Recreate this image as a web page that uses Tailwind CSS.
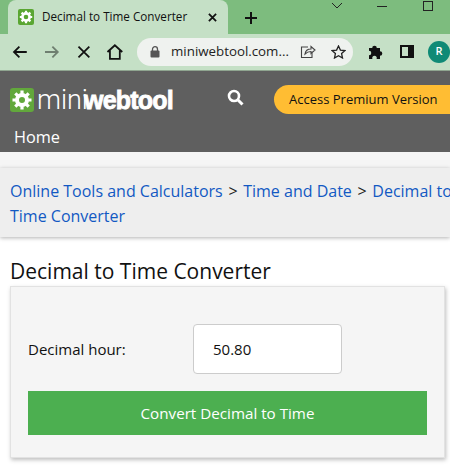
<!DOCTYPE html>
<html><head><meta charset="utf-8"><script src="https://cdn.jsdelivr.net/npm/@tailwindcss/browser@4"></script></head>
<body class="w-[450px] h-[467px] overflow-hidden bg-white font-['Open_Sans','Noto_Sans',sans-serif]">
<!-- tab strip -->
<div class="relative h-[34px] bg-[#7dbc7e] flex items-end pl-[8px]">
  <div class="w-[220px] h-[34px] bg-[#c5e0c6] rounded-t-[8px] flex items-center pl-[10px] text-[#111]">
    <svg width="16" height="16" viewBox="0 0 16 16" class="mr-[8px] shrink-0"><rect width="16" height="16" rx="2" fill="#5aa632"/><circle cx="8" cy="8" r="3.6" fill="none" stroke="#fff" stroke-width="2.6"/><path d="M8 1.8v3M8 11.2v3M1.8 8h3M11.2 8h3M3.6 3.6l2.1 2.1M10.3 10.3l2.1 2.1M12.4 3.6l-2.1 2.1M5.7 10.3l-2.1 2.1" stroke="#fff" stroke-width="2.2"/></svg>
    <span class="text-[11.7px] leading-none whitespace-nowrap w-[166px]">Decimal to Time Converter</span>
    <svg width="9" height="9" viewBox="0 0 10 10"><path d="M1 1l8 8M9 1l-8 8" stroke="#111" stroke-width="2"/></svg>
  </div>
  <svg width="14" height="14" viewBox="0 0 14 14" class="ml-[16px] mb-[9px]"><path d="M7 1v12M1 7h12" stroke="#111" stroke-width="2"/></svg>
  <svg width="12" height="7" viewBox="0 0 12 7" class="absolute left-[331px] top-[2px]"><path d="M1 1l5 5 5-5" fill="none" stroke="#222" stroke-width="1"/></svg>
  <div class="absolute left-[377px] top-[6px] w-[10px] h-px bg-[#222]"></div>
  <div class="absolute left-[423px] top-[1px] w-[10px] h-[10px] border border-[#222]"></div>
</div>
<!-- toolbar -->
<div class="h-[36px] bg-[#c5e0c6] flex items-center relative">
  <svg width="16" height="14" viewBox="0 0 16 14" class="ml-[12px]"><path d="M15 7H2M7.5 1.500L2 7l5.500 5.500" fill="none" stroke="#111" stroke-width="1.800"/></svg>
  <svg width="16" height="14" viewBox="0 0 16 14" class="ml-[16px]"><path d="M1 7h13M8.500 1.500L14 7l-5.500 5.500" fill="none" stroke="#6f7f70" stroke-width="1.800"/></svg>
  <svg width="14" height="14" viewBox="0 0 14 14" class="ml-[17px]"><path d="M1.500 1.500l11 11M12.500 1.500l-11 11" stroke="#111" stroke-width="1.800"/></svg>
  <svg width="18" height="16" viewBox="0 0 18 16" class="ml-[16px]"><path d="M1.500 8L9 1.200 16.500 8M4 6.500V15h10V6.500" fill="none" stroke="#111" stroke-width="1.800"/></svg>
  <div class="ml-[13px] w-[219px] h-[28px] bg-[#eff2ef] rounded-full flex items-center pl-[13px] mt-[-1px]">
    <svg width="10" height="12" viewBox="0 0 10 12" class="shrink-0"><rect x="0.500" y="4.500" width="9" height="7" rx="1" fill="#555"/><path d="M2.500 5V3.200a2.500 2.500 0 015 0V5" fill="none" stroke="#555" stroke-width="1.300"/></svg>
    <span class="ml-[11px] text-[13.3px] leading-none text-[#222] whitespace-nowrap">miniwebtool.com...</span>
    <svg width="16" height="15" viewBox="0 0 16 15" class="ml-[11px] shrink-0"><path d="M8 3H1.500v10.500h10.500V9" fill="none" stroke="#444" stroke-width="1.100"/><path d="M5 10c.5-3.500 3-5 6-5V2.500L15 6l-4 3.500V7.500c-2.500 0-4.500 1-6 2.500z" fill="none" stroke="#444" stroke-width="1.100"/></svg>
    <svg width="15" height="14" viewBox="0 0 15 14" class="ml-[15px] shrink-0"><path d="M7.500 1l1.900 4.100 4.500.5-3.300 3 .9 4.400-4-2.200-4 2.200.9-4.400-3.300-3 4.500-.5z" fill="none" stroke="#222" stroke-width="1.300"/></svg>
  </div>
  <svg width="15" height="15" viewBox="0 0 15 15" class="ml-[15px] shrink-0 mt-[-1px]"><path d="M1 4h3.200a2.300 2.300 0 114.600 0H12v3.200a2.300 2.300 0 110 4.600V15H8.600a2.300 2.300 0 10-4.200 0H1v-3.700a2.300 2.300 0 100-4.600z" fill="#111"/></svg>
  <div class="ml-[17px] w-[14px] h-[13px] border-2 border-[#111] border-r-[6px] shrink-0 mt-[-1px]"></div>
  <div class="ml-[14px] w-[22px] h-[22px] rounded-full bg-[#0f8a76] text-white text-[11px] font-semibold flex items-center justify-center shrink-0 mt-[-1px]">R</div>
</div>
<!-- site header -->
<div class="h-[82px] bg-[#5f5f5f] border-t border-[#8fa590] relative">
  <div class="flex items-center pl-[10px] pt-[15px]">
    <svg width="24" height="24" viewBox="0 0 24 24" class="shrink-0"><rect width="24" height="24" rx="3" fill="#62a83c"/><circle cx="12" cy="12" r="5" fill="none" stroke="#fff" stroke-width="4"/><path d="M12 2.500v4M12 17.500v4M2.500 12h4M17.500 12h4M5.300 5.300l2.800 2.800M15.900 15.900l2.800 2.800M18.700 5.300l-2.800 2.800M8.100 15.900l-2.800 2.800" stroke="#fff" stroke-width="3.200"/></svg>
    <span class="ml-[3px] w-[47px] text-white text-[27px] leading-[28px] font-['Roboto',sans-serif] font-light whitespace-nowrap">mini</span><span class="text-white text-[25px] leading-[28px] font-['Liberation_Sans',sans-serif] font-bold [-webkit-text-stroke:0.8px_white] tracking-[-0.8px] whitespace-nowrap">webtool</span>
  </div>
  <svg width="17" height="17" viewBox="0 0 17 17" class="absolute left-[227px] top-[18px]"><circle cx="7" cy="7" r="5" fill="none" stroke="#fff" stroke-width="2.600"/><path d="M11 11l4.500 4.500" stroke="#fff" stroke-width="3"/></svg>
  <div class="absolute left-[274px] top-[14px] w-[176px] h-[29px] bg-[#ffbd33] rounded-l-full rounded-r-[14px] text-[#111] text-[13px] leading-[29px] pl-[15px] whitespace-nowrap">Access Premium Version</div>
  <div class="pl-[14px] pt-[12px] text-white text-[16.3px] leading-[22px]">Home</div>
</div>
<!-- breadcrumb -->
<div class="h-[16px] bg-[#f5f5f5]"></div>
<div class="h-[69px] bg-[#eeeeee] shadow-[0_1px_4px_rgba(0,0,0,0.3)] pl-[10px] pt-[11px] text-[16px] leading-[25px] whitespace-nowrap overflow-hidden text-[#222]">
  <div><span class="text-[#1259c3]">Online Tools and Calculators</span><span class="px-[1.5px]"> &gt; </span><span class="text-[#1259c3]">Time and Date</span><span class="px-[1.5px]"> &gt; </span><span class="text-[#1259c3]">Decimal to</span></div>
  <div class="text-[#1259c3]">Time Converter</div>
</div>
<h1 class="ml-[10px] mt-[20px] text-[21px] leading-[28px] font-normal text-[#111] whitespace-nowrap">Decimal to Time Converter</h1>
<!-- card -->
<div class="ml-[10px] mt-[1px] w-[435px] h-[172px] bg-[#f5f5f5] border border-[#e2e2e2] shadow-[1px_2px_4px_rgba(0,0,0,0.25)] px-[17px] pt-[37px]">
  <div class="flex items-center h-[50px]">
    <label class="w-[165px] text-[15px] text-[#111] whitespace-nowrap">Decimal hour:</label>
    <div class="w-[149px] h-[50px] bg-white border border-[#ccc] rounded-[4px] pl-[19px] text-[15px] leading-[48px] text-[#111]">50.80</div>
  </div>
  <div class="mt-[17px] w-[399px] h-[44px] bg-[#4caf50] text-white text-[15.2px] font-medium flex items-center justify-center">Convert Decimal to Time</div>
</div>
</body></html>
